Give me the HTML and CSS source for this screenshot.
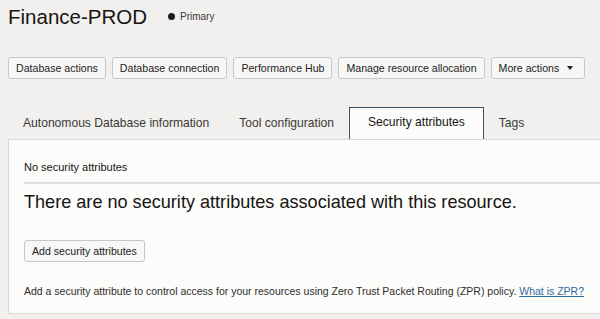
FILE: index.html
```html
<!DOCTYPE html>
<html lang="en">
<head>
  <meta charset="UTF-8" />
  <meta name="viewport" content="width=device-width, initial-scale=1.0"/>
  <title>Finance-PROD</title>
  <link rel="stylesheet" href="styles.css">
</head>
<body>
  <div class="page">
    <div class="header">
      <h1>Finance-PROD</h1>
      <span class="status"><span class="dot"></span>Primary</span>
    </div>

    <div class="actions">
      <button>Database actions</button>
      <button>Database connection</button>
      <button>Performance Hub</button>
      <button>Manage resource allocation</button>
      <button class="menu-btn">More actions <span class="caret"></span></button>
    </div>

    <div class="tabs">
      <div class="tab">Autonomous Database information</div>
      <div class="tab">Tool configuration</div>
      <div class="tab active">Security attributes</div>
      <div class="tab">Tags</div>
    </div>

    <div class="panel">
      <div class="panel-title">No security attributes</div>
      <h2>There are no security attributes associated with this resource.</h2>
      <button>Add security attributes</button>
      <p class="note">Add a security attribute to control access for your resources using Zero Trust Packet Routing (ZPR) policy. <a href="#">What is ZPR?</a></p>
    </div>
  </div>
</body>
</html>
```

FILE: styles.css
```css
body {
  margin: 0;
  font-family: "Liberation Sans", Arial, sans-serif;
  color: #161513;
  background-color: #f1f0ee;
  overflow: hidden;
}

.page {
  padding: 5px 0 0 8px;
}

.header {
  display: flex;
  align-items: center;
  height: 24px;
}

h1 {
  margin: 0;
  font-size: 20.5px;
  font-weight: 400;
  line-height: 24px;
}

.status {
  display: flex;
  align-items: center;
  margin-left: 21px;
  margin-top: -2px;
  font-size: 10px;
  color: #3c3a37;
}

.dot {
  width: 7px;
  height: 7px;
  border-radius: 50%;
  background-color: #1d1c1a;
  margin-right: 5px;
}

.actions {
  display: flex;
  gap: 6px;
  margin-top: 28px;
}

button {
  height: 22px;
  padding: 0 7px;
  font-family: inherit;
  font-size: 10.6px;
  color: #222;
  background-color: #f7f7f6;
  border: 1px solid #c6c6c4;
  border-radius: 3px;
  cursor: pointer;
}

.menu-btn {
  display: flex;
  align-items: center;
  padding-right: 11px;
}

.caret {
  margin-left: 8px;
  border-left: 3.5px solid transparent;
  border-right: 3.5px solid transparent;
  border-top: 4px solid #222;
}

.tabs {
  display: flex;
  margin-top: 28px;
  position: relative;
  z-index: 1;
}

.tab {
  height: 30px;
  line-height: 29px;
  padding: 0 13px;
  font-size: 12.1px;
  color: #3a3936;
  border: 2px solid transparent;
  border-bottom: none;
}

.tab.active {
  padding: 0 18px;
  color: #161513;
  background-color: #fcfcfb;
  border-color: #3e5163;
  border-width: 1.5px;
  height: 31px;
  margin-bottom: -1px;
}

.panel {
  background-color: #fcfcfb;
  border: 1px solid #d9d8d5;
  border-right: none;
  padding: 20px 0 15px 15px;
}

.panel-title {
  font-size: 11px;
  line-height: 14px;
  padding-bottom: 8px;
  border-bottom: 2px solid #e2e1de;
}

h2 {
  margin: 7px 0 27px;
  font-size: 18.1px;
  font-weight: 400;
  line-height: 22px;
}

.note {
  margin: 22px 0 0;
  font-size: 10.5px;
  line-height: 14px;
  color: #2e2d2a;
}

.note a {
  color: #2f6b9a;
}
```
